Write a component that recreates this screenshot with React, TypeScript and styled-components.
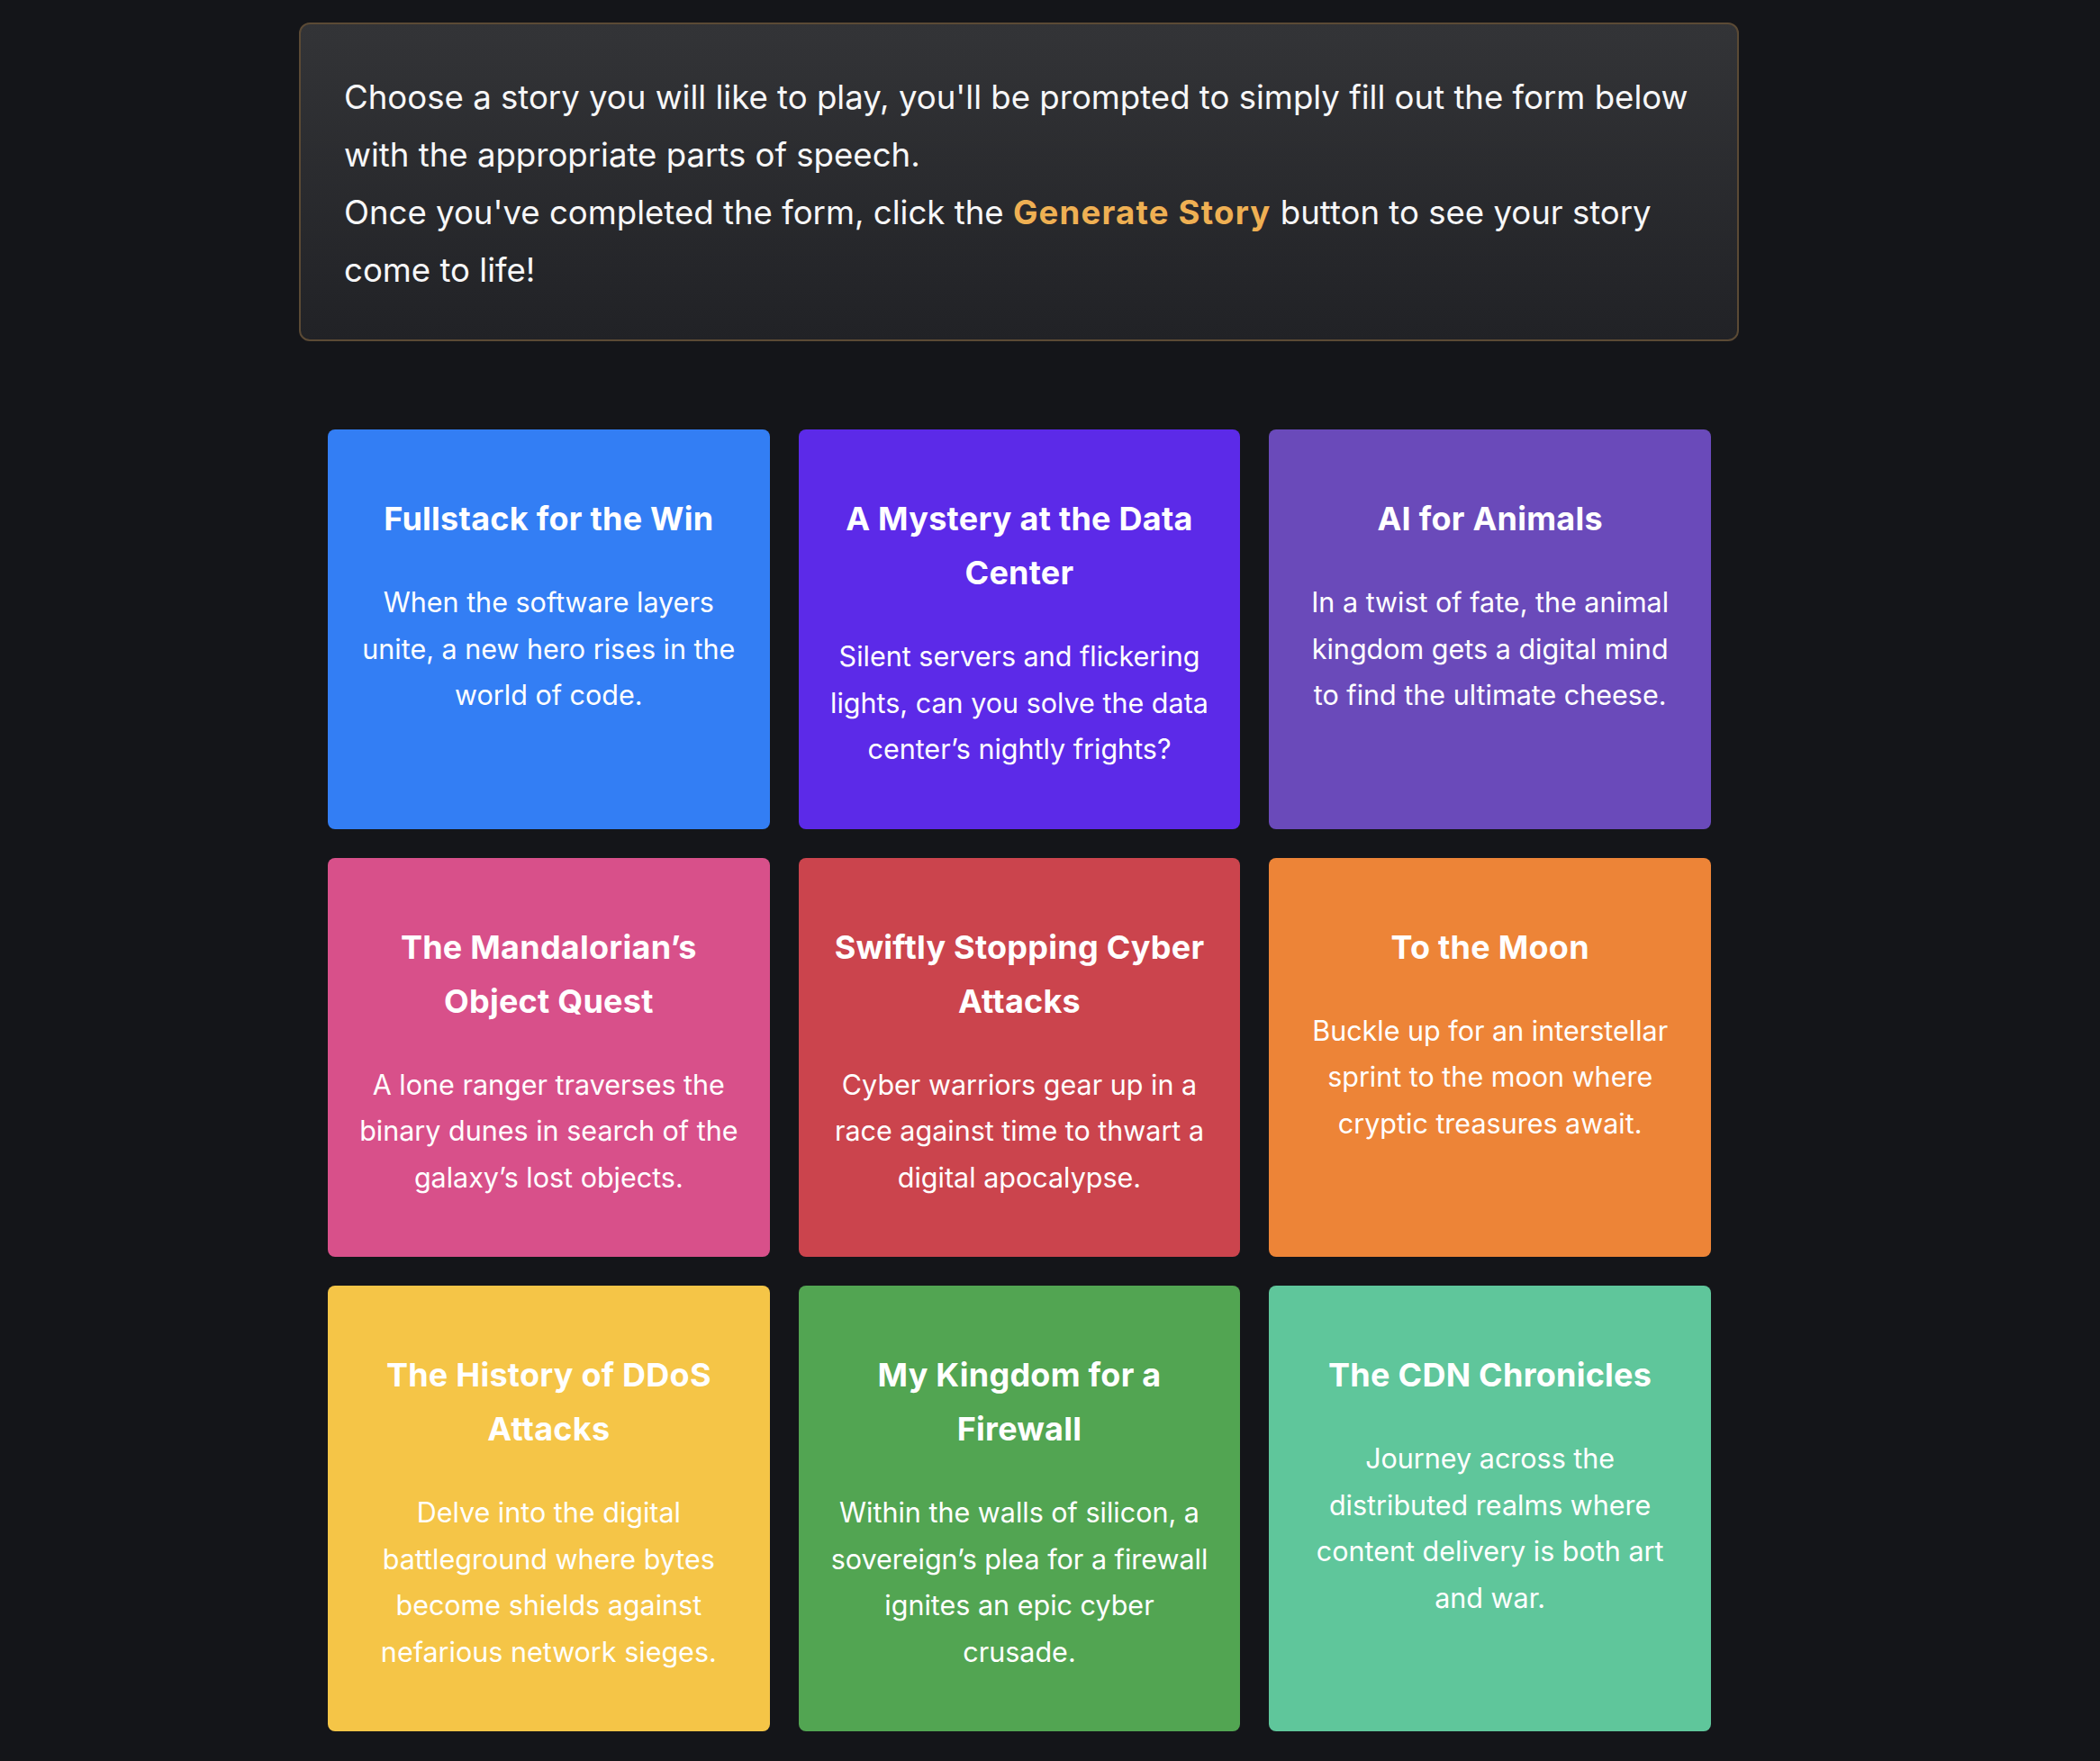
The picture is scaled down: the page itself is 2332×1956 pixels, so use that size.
import React from "react";
import styled, { createGlobalStyle } from "styled-components";

const GlobalStyle = createGlobalStyle`
  html, body {
    margin: 0;
    padding: 0;
    background: #141519;
  }
  body {
    font-family: Inter, "Noto Sans", "Liberation Sans", sans-serif;
    color: #ffffff;
    -webkit-font-smoothing: antialiased;
  }
  * { box-sizing: border-box; }
`;

const Main = styled.main`
  width: 1599px;
  margin: 25px 0 0 332px;
  padding-bottom: 32px;
`;

const Intro = styled.section`
  padding: 49px 46px 45px 48px;
  border: 2px solid #5b4a35;
  border-radius: 12px;
  background: linear-gradient(180deg, #333437 0%, #212226 100%);
`;

const IntroLine = styled.p`
  margin: 0;
  font-size: 36.6px;
  line-height: 64px;
  font-weight: 400;
  color: #f7f7f8;
`;

const Highlight = styled.strong`
  color: #efb053;
  font-weight: 700;
  letter-spacing: 1.2px;
`;

const Grid = styled.div`
  display: grid;
  grid-template-columns: repeat(3, 1fr);
  gap: 32px;
  margin-top: 98px;
  padding: 0 31px 0 32px;
`;

const Card = styled.article<{ $bg: string }>`
  display: flex;
  flex-direction: column;
  align-items: center;
  text-align: center;
  padding: 69px 32px 63px;
  border-radius: 8px;
  background: ${(p) => p.$bg};
  cursor: pointer;
`;

const Title = styled.h2`
  margin: 0 0 37px;
  font-size: 36px;
  line-height: 60px;
  font-weight: 700;
  letter-spacing: 0.25px;
  color: #ffffff;
`;

const Desc = styled.p`
  margin: 0;
  font-size: 30.5px;
  line-height: 51.5px;
  font-weight: 400;
  color: #ffffff;
`;

const stories = [
  {
    title: "Fullstack for the Win",
    desc: "When the software layers unite, a new hero rises in the world of code.",
    bg: "#337ef4",
  },
  {
    title: "A Mystery at the Data Center",
    desc: "Silent servers and flickering lights, can you solve the data center\u2019s nightly frights?",
    bg: "#5c2ae8",
  },
  {
    title: "AI for Animals",
    desc: "In a twist of fate, the animal kingdom gets a digital mind to find the ultimate cheese.",
    bg: "#6a4aba",
  },
  {
    title: "The Mandalorian\u2019s Object Quest",
    desc: "A lone ranger traverses the binary dunes in search of the galaxy\u2019s lost objects.",
    bg: "#d8508a",
  },
  {
    title: "Swiftly Stopping Cyber Attacks",
    desc: "Cyber warriors gear up in a race against time to thwart a digital apocalypse.",
    bg: "#cb444d",
  },
  {
    title: "To the Moon",
    desc: "Buckle up for an interstellar sprint to the moon where cryptic treasures await.",
    bg: "#ed8437",
  },
  {
    title: "The History of DDoS Attacks",
    desc: "Delve into the digital battleground where bytes become shields against nefarious network sieges.",
    bg: "#f5c547",
  },
  {
    title: "My Kingdom for a Firewall",
    desc: "Within the walls of silicon, a sovereign\u2019s plea for a firewall ignites an epic cyber crusade.",
    bg: "#52a552",
  },
  {
    title: "The CDN Chronicles",
    desc: "Journey across the distributed realms where content delivery is both art and war.",
    bg: "#5fc69b",
  },
];

export default function App() {
  return (
    <>
      <GlobalStyle />
      <Main>
        <Intro>
          <IntroLine>
            Choose a story you will like to play, you'll be prompted to simply fill out the form below
            with the appropriate parts of speech.
          </IntroLine>
          <IntroLine>
            Once you've completed the form, click the <Highlight>Generate Story</Highlight> button to
            see your story come to life!
          </IntroLine>
        </Intro>
        <Grid>
          {stories.map((s) => (
            <Card key={s.title} $bg={s.bg}>
              <Title>{s.title}</Title>
              <Desc>{s.desc}</Desc>
            </Card>
          ))}
        </Grid>
      </Main>
    </>
  );
}
